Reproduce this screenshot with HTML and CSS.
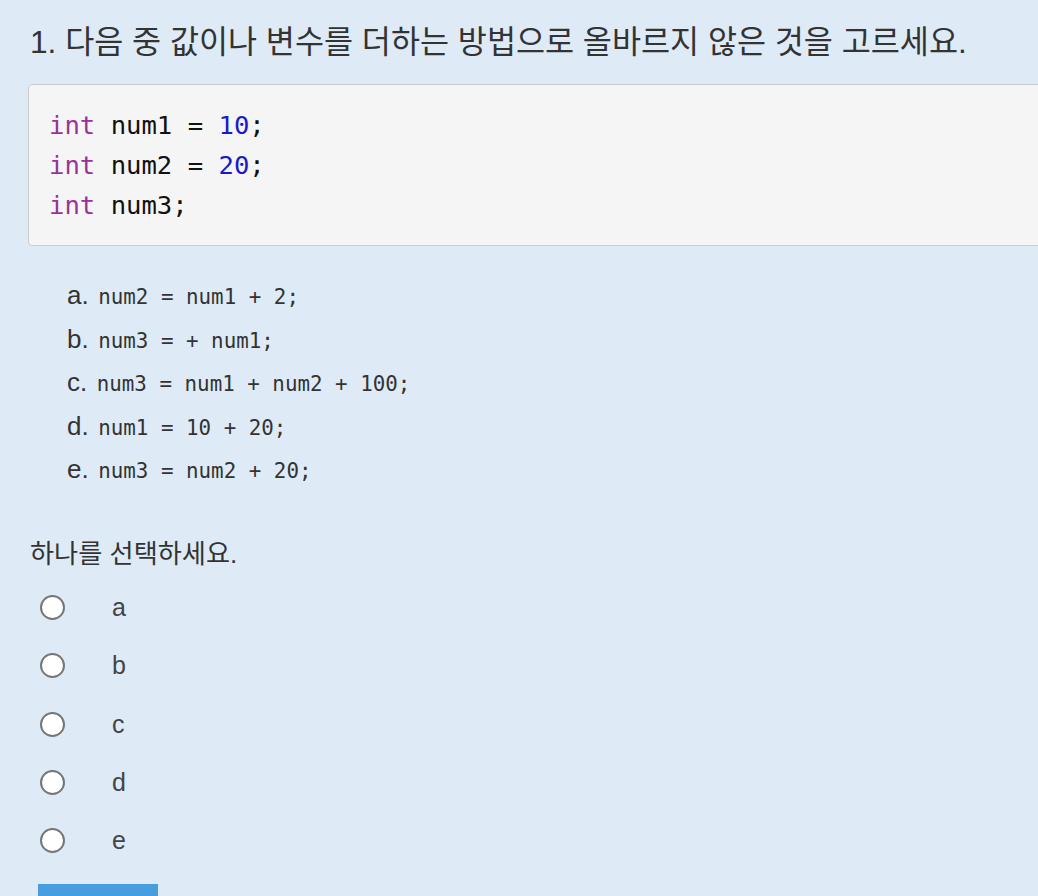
FILE: index.html
```html
<!DOCTYPE html>
<html lang="ko">
<head>
<meta charset="utf-8">
<link rel="stylesheet" href="styles.css">
</head>
<body>
<div class="question">
  <h1 class="qtext">1. 다음 중 값이나 변수를 더하는 방법으로 올바르지 않은 것을 고르세요.</h1>
  <pre class="code"><span class="kw">int</span> num1 = <span class="num">10</span>;
<span class="kw">int</span> num2 = <span class="num">20</span>;
<span class="kw">int</span> num3;</pre>
  <ol class="choices">
    <li><span class="lbl">a.</span> <code>num2 = num1 + 2;</code></li>
    <li><span class="lbl">b.</span> <code>num3 = + num1;</code></li>
    <li><span class="lbl">c.</span> <code>num3 = num1 + num2 + 100;</code></li>
    <li><span class="lbl">d.</span> <code>num1 = 10 + 20;</code></li>
    <li><span class="lbl">e.</span> <code>num3 = num2 + 20;</code></li>
  </ol>
  <p class="prompt">하나를 선택하세요.</p>
  <div class="answers">
    <label class="answer"><span class="radio"></span><span class="atext">a</span></label>
    <label class="answer"><span class="radio"></span><span class="atext">b</span></label>
    <label class="answer"><span class="radio"></span><span class="atext">c</span></label>
    <label class="answer"><span class="radio"></span><span class="atext">d</span></label>
    <label class="answer"><span class="radio"></span><span class="atext">e</span></label>
  </div>
  <div class="submit"></div>
</div>
</body>
</html>
```
FILE: styles.css
```css
html, body {
  margin: 0;
  padding: 0;
  background: #deebf7;
  overflow: hidden;
}
.question {
  padding: 24px 0 0 30px;
  font-family: "Liberation Sans", "Noto Sans CJK KR", sans-serif;
  color: #333;
}
.qtext {
  margin: 0;
  font-family: "Liberation Sans", "Noto Sans CJK KR", sans-serif;
  font-weight: normal;
  font-size: 31.6px;
  line-height: 36px;
  color: #333;
  white-space: nowrap;
}
.code {
  margin: 24px -40px 0 -2px;
  padding: 20px 20px;
  background: #f5f5f5;
  border: 1px solid #ccc;
  border-radius: 4px;
  font-family: "DejaVu Sans Mono", monospace;
  font-size: 25.6px;
  line-height: 40px;
  color: #111;
}
.kw { color: #993399; }
.num { color: #1a1acc; }
.choices {
  list-style: none;
  margin: 28px 0 0 0;
  padding: 0 0 0 37px;
}
.choices li {
  height: 43.5px;
  line-height: 43.5px;
  white-space: nowrap;
}
.lbl {
  font-size: 26px;
  color: #333;
}
.choices code {
  margin-left: 5px;
  font-family: "DejaVu Sans Mono", monospace;
  font-size: 20.85px;
  color: #333;
}
.prompt {
  margin: 46px 0 0 0;
  font-size: 26.2px;
  line-height: 32px;
}
.answers {
  margin-top: 9px;
  display: flex;
  flex-direction: column;
}
.answer {
  display: flex;
  align-items: center;
  height: 58.25px;
  padding-left: 10px;
}
.radio {
  width: 21px;
  height: 21px;
  border: 2px solid #767676;
  border-radius: 50%;
  background: #fff;
  flex: none;
}
.atext {
  margin-left: 47px;
  font-size: 25px;
  color: #444;
}
.submit {
  margin: 14px 0 0 8px;
  width: 120px;
  height: 40px;
  background: #469de0;
}
```
